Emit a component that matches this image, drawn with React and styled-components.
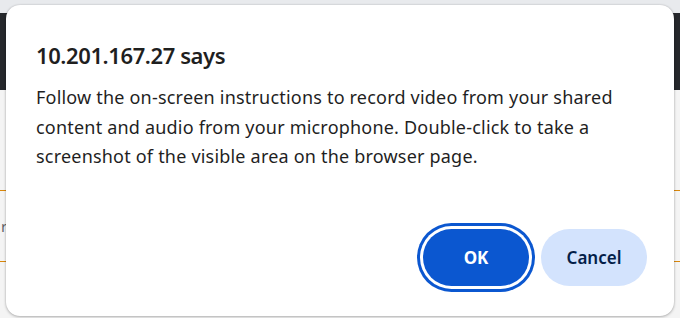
import React from "react";
import styled, { createGlobalStyle } from "styled-components";

const Global = createGlobalStyle`
  html, body { margin: 0; padding: 0; }
  body {
    width: 680px;
    height: 318px;
    overflow: hidden;
    background: #f1f3f4;
    font-family: "Noto Sans", "Open Sans", sans-serif;
  }
`;

const Page = styled.div`
  position: relative;
  width: 680px;
  height: 318px;
  display: flex;
  flex-direction: column;
`;

const TopStrip = styled.div`
  height: 13px;
  background: #e8eaed;
`;

const DarkBar = styled.div`
  height: 77px;
  background: #26282c;
`;

const PageBody = styled.div`
  flex: 1;
  background: #f4f4f4;
  padding-top: 100px;
`;

const Section = styled.div`
  height: 70px;
  border-top: 1px solid #d9870b;
  border-bottom: 1px solid #d9870b;
  display: flex;
  align-items: center;
  font-size: 15px;
  color: #5f6368;
  padding-left: 1px;
`;

const Dialog = styled.div`
  position: absolute;
  left: 6px;
  top: 5px;
  width: 668px;
  height: 311px;
  box-sizing: border-box;
  background: #ffffff;
  border-radius: 14px;
  box-shadow: 0 1px 3px rgba(0, 0, 0, 0.25), 0 0 2px rgba(0, 0, 0, 0.15);
  padding: 35px 27px 30px 30px;
  display: flex;
  flex-direction: column;
`;

const Title = styled.div`
  font-size: 22px;
  font-weight: 600;
  line-height: 30px;
  color: #1f1f1f;
  letter-spacing: -0.4px;
`;

const Message = styled.div`
  margin-top: 13px;
  font-size: 18px;
  line-height: 29.5px;
  color: #1f1f1f;
  max-width: 600px;
  letter-spacing: 0.2px;
`;

const Buttons = styled.div`
  margin-top: auto;
  display: flex;
  justify-content: flex-end;
  align-items: center;
  gap: 12px;
`;

const Button = styled.button`
  height: 57px;
  width: 106px;
  border-radius: 29px;
  border: none;
  font-family: inherit;
  font-size: 17px;
  font-weight: ${(p) => (p.$primary ? 700 : 600)};
  cursor: pointer;
  background: ${(p) => (p.$primary ? "#0b57d0" : "#d3e3fd")};
  color: ${(p) => (p.$primary ? "#ffffff" : "#041e49")};
  box-shadow: ${(p) =>
    p.$primary ? "0 0 0 3px #ffffff, 0 0 0 6px #0b57d0" : "none"};
`;

export default function App() {
  return (
    <>
      <Global />
      <Page>
        <TopStrip />
        <DarkBar />
        <PageBody>
          <Section>r</Section>
        </PageBody>
        <Dialog>
          <Title>10.201.167.27 says</Title>
          <Message>
            Follow the on-screen instructions to record video from your shared
            content and audio from your microphone. Double-click to take a
            screenshot of the visible area on the browser page.
          </Message>
          <Buttons>
            <Button $primary>OK</Button>
            <Button>Cancel</Button>
          </Buttons>
        </Dialog>
      </Page>
    </>
  );
}
